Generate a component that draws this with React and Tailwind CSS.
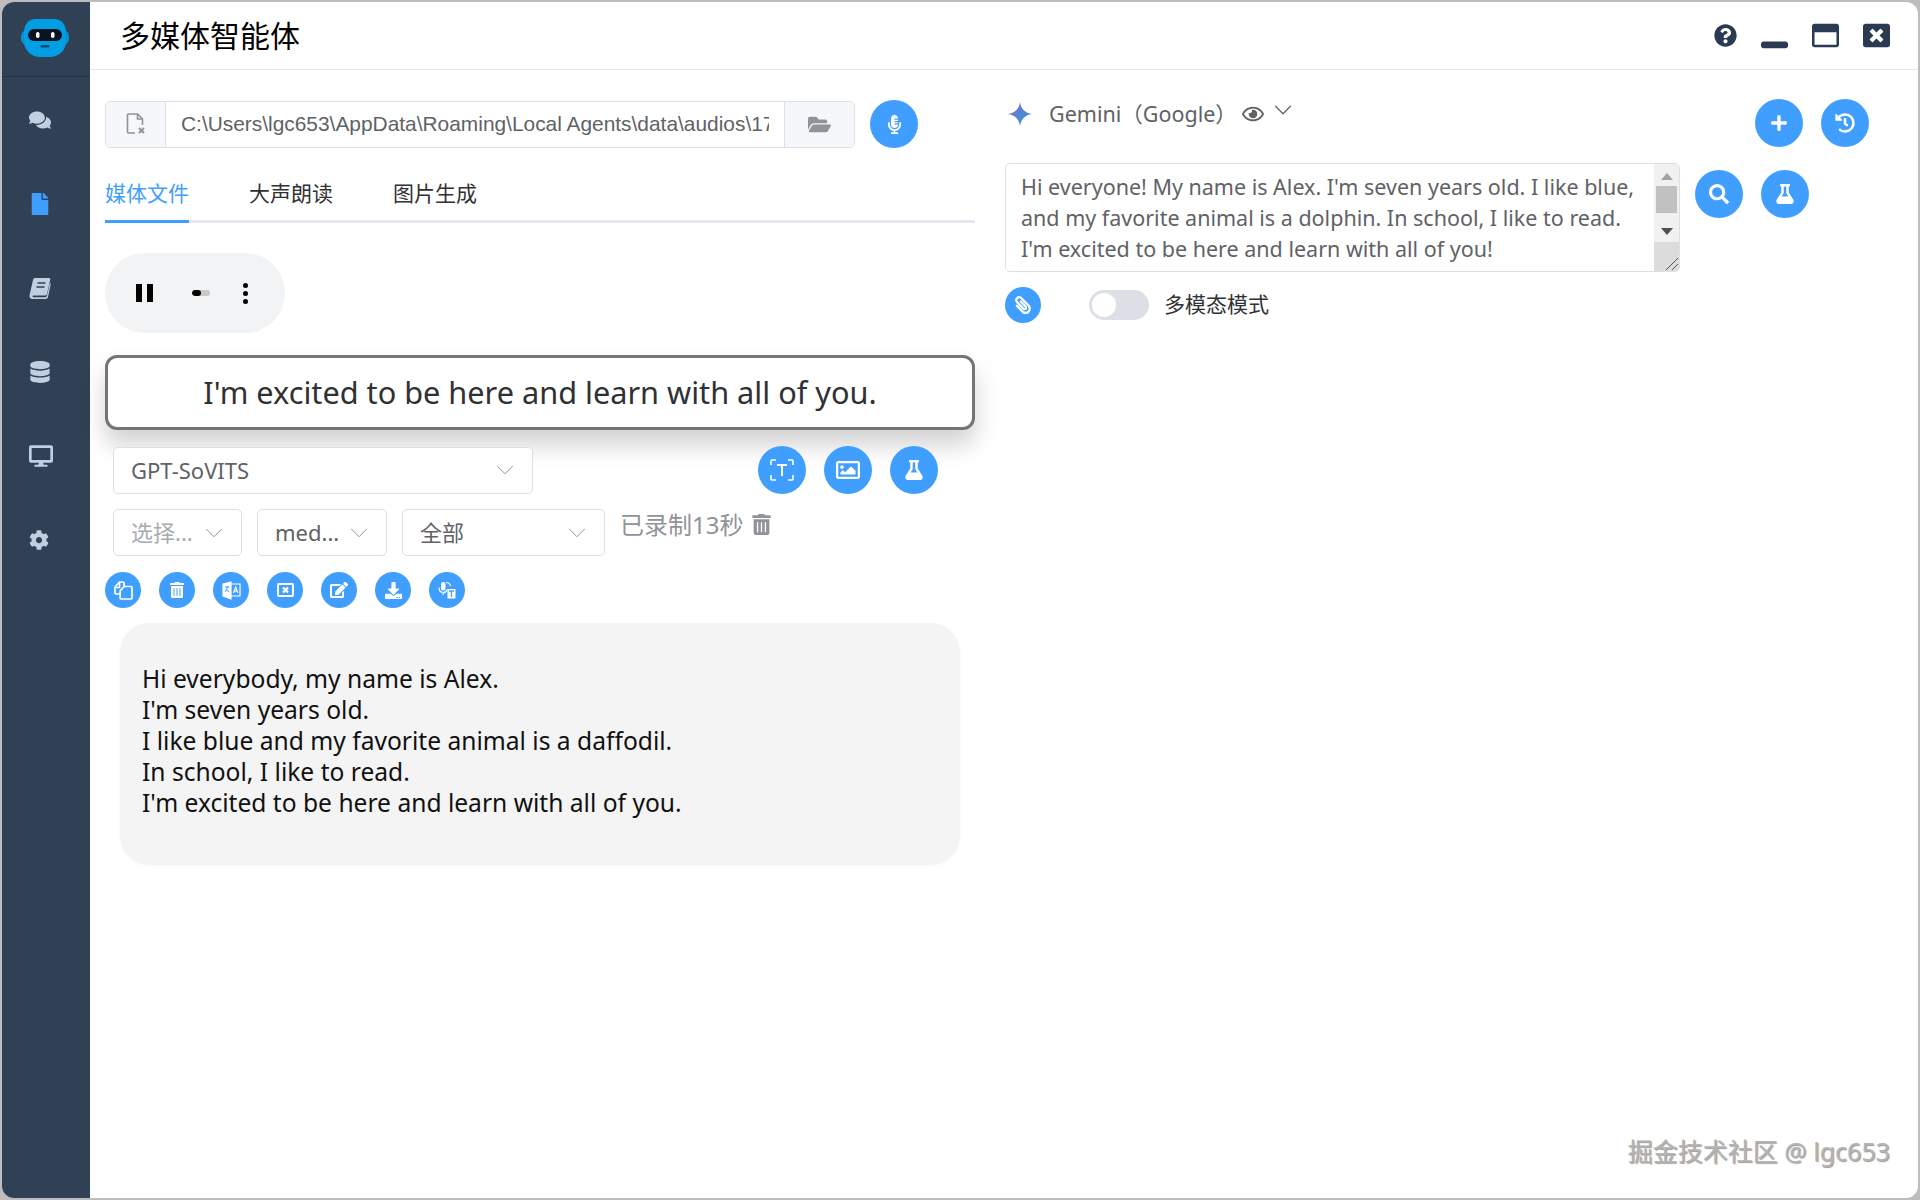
import {
  FaComments,
  FaCog,
  FaDatabase,
  FaDesktop,
  FaDownload,
  FaEdit,
  FaFile,
  FaFlask,
  FaFolderOpen,
  FaHistory,
  FaMicrophoneAlt,
  FaPaperclip,
  FaPlus,
  FaQuestionCircle,
  FaRegEye,
  FaRegImage,
  FaRegWindowMaximize,
  FaSearch,
  FaTrashAlt,
  FaWindowClose,
  FaWindowMinimize
} from 'react-icons/fa'
import { ChevronDown } from 'lucide-react'

const uiFont = "font-['Noto_Sans','Noto_Sans_CJK_SC',sans-serif]"

function Logo() {
  return (
    <svg width="48" height="40" viewBox="0 0 48 40">
      <rect x="0" y="12" width="48" height="15" rx="6" fill="#0a8fd0" />
      <path d="M15 1h18c8 0 12 6 12 14v8c0 10-8 16-16 16H19C11 39 3 33 3 23v-8C3 7 7 1 15 1z" fill="#009fe3" />
      <rect x="7" y="11" width="34" height="12" rx="6" fill="#0b1220" />
      <rect x="15" y="14" width="3.5" height="6" rx="1.7" fill="#fff" />
      <rect x="30" y="14" width="3.5" height="6" rx="1.7" fill="#fff" />
      <rect x="19.5" y="27" width="9" height="2.5" rx="1.2" fill="#0b4a70" />
    </svg>
  )
}

// the tilted book of the older icon set
function TiltedBook({ className }) {
  return (
    <svg width="22" height="22" viewBox="0 0 22 22" className={className}>
      <path
        d="M6 1h14c1 0 1.500.8 1.200 1.800L18 17c-.3 1-1 1.500-2 1.500H4.500c-1.200 0-1.500 1.800 0 1.800H16c1 0 1.600-.6 2-1.500l3-13c.5.400.8 1 .6 2L19 20c-.3 1.200-1.200 2-2.500 2H3.500C1.500 22 0 20.500.6 18L4 3c.3-1.200 1-2 2-2z"
        fill="currentColor"
      />
      <path d="M8.500 6h8M7.500 10h8" stroke="#304156" strokeWidth="1.600" />
    </svg>
  )
}

function Sidebar() {
  const items = [
    { icon: FaComments, size: 22, color: 'text-[#c0d0e2]' },
    { icon: FaFile, size: 22, color: 'text-[#409eff]' },
    { icon: TiltedBook, size: 22, color: 'text-[#c0d0e2]' },
    { icon: FaDatabase, size: 22, color: 'text-[#c0d0e2]' },
    { icon: FaDesktop, size: 24, color: 'text-[#c0d0e2]' },
    { icon: FaCog, size: 20, color: 'text-[#c0d0e2]' }
  ]
  return (
    <aside className="w-[88px] shrink-0 bg-[#304156] flex flex-col">
      <div className="h-[75px] border-b border-[#263447] flex items-center pl-[19px] pb-[3px]">
        <Logo />
      </div>
      <nav className="flex flex-col pt-px">
        {items.map((item, idx) => (
          <div key={idx} className="h-[84px] flex items-center pl-[27px]">
            <item.icon size={item.size} className={item.color} />
          </div>
        ))}
      </nav>
    </aside>
  )
}

function Header() {
  return (
    <header className="h-[68px] shrink-0 border-b border-[#e6e6e6] flex items-center pl-[30px] pr-[28px]">
      <h1 className="text-[30px] font-normal text-black leading-none flex-1 pb-[4px] font-['Noto_Sans_CJK_SC',sans-serif]">
        多媒体智能体
      </h1>
      <div className="flex items-center text-[#2a3a52]">
        <FaQuestionCircle size={23} />
        <FaWindowMinimize size={27} className="ml-[24px] mt-[2px]" />
        <FaRegWindowMaximize size={27} className="ml-[24px]" />
        <FaWindowClose size={27} className="ml-[24px]" />
      </div>
    </header>
  )
}

function Round({ size = 'lg', children }) {
  return (
    <button
      className={`rounded-full bg-[#409eff] text-white flex items-center justify-center shrink-0 ${
        size === 'lg' ? 'w-12 h-12' : 'w-9 h-9'
      }`}
    >
      {children}
    </button>
  )
}

function Select({ width, text, muted }) {
  return (
    <div
      className={`h-[47px] shrink-0 border border-[#dcdfe6] rounded-[5px] bg-white flex items-center justify-between pl-[17px] pr-[12px] text-[22px] ${width} ${
        muted ? 'text-[#a8abb2]' : 'text-[#606266]'
      }`}
    >
      <span className="whitespace-nowrap">{text}</span>
      <ChevronDown size={30} strokeWidth={0.8} className="text-[#909399] shrink-0" />
    </div>
  )
}

function FileXIcon() {
  return (
    <svg width="20" height="22" viewBox="0 0 20 22" fill="none" stroke="#8f9399" strokeWidth="1.6">
      <path d="M9 20H2.500a1 1 0 0 1-1-1V2a1 1 0 0 1 1-1h9l5 5v6" />
      <path d="M11.500 1v5h5" />
      <path d="M13 15l5 5M18 15l-5 5" strokeWidth="2" />
    </svg>
  )
}

function TextScanIcon() {
  return (
    <svg width="24" height="22" viewBox="0 0 24 22" fill="none" stroke="currentColor" strokeWidth="1.6">
      <path d="M1 6V2a1 1 0 0 1 1-1h4M18 1h4a1 1 0 0 1 1 1v4M23 16v4a1 1 0 0 1-1 1h-4M6 21H2a1 1 0 0 1-1-1v-4" />
      <path d="M7 6h10M12 6v11" strokeWidth="2" />
    </svg>
  )
}

function CopyIcon() {
  return (
    <svg width="19" height="19" viewBox="0 0 19 19" fill="none" stroke="currentColor" strokeWidth="1.700">
      <path d="M6 13H2a1 1 0 0 1-1-1V6l4.500-5H9a1 1 0 0 1 1 1v3" />
      <path d="M1 6.500h4.500V1" />
      <path d="M7 18a1 1 0 0 1-.9-1V10l4-4.500H17a1 1 0 0 1 1 1V17a1 1 0 0 1-1 1z" />
    </svg>
  )
}

function TranslateIcon() {
  return (
    <svg width="19" height="19" viewBox="0 0 19 19" fill="none" stroke="currentColor" strokeWidth="1.200">
      <path d="M1 3l8-2v17l-8-3z" fill="currentColor" />
      <path d="M9 3h9v12H9" />
      <path d="M11.500 12l2.200-6 2.200 6M12.300 10h3" />
      <path d="M3 6h4.500M5.200 5v1c0 2-1 4-2.200 5M4 8c.5 1 1.500 2 3.200 3" stroke="#409eff" strokeWidth="1" />
    </svg>
  )
}

function BoxCloseIcon() {
  return (
    <svg width="17" height="14" viewBox="0 0 17 14" fill="none">
      <rect x="1" y="1" width="15" height="12" rx="1" stroke="currentColor" strokeWidth="2" />
      <path d="M6 4.500l5 5M11 4.500l-5 5" stroke="currentColor" strokeWidth="2.400" />
    </svg>
  )
}

function MicTextIcon() {
  return (
    <svg width="18" height="18" viewBox="0 0 18 18" fill="none">
      <rect x="3" y="1" width="4.500" height="8.500" rx="2.200" fill="currentColor" />
      <path d="M1 6.500c0 3 1.600 5 4.200 5s3.400-1.400 3.800-3M5.200 11.500V14" stroke="currentColor" strokeWidth="1.200" />
      <path d="M8 1.500c2.500 0 4 1.400 4.500 3.500" stroke="currentColor" strokeWidth="1.200" />
      <rect x="9.500" y="8" width="8" height="9.500" fill="currentColor" />
      <path d="M11 10h5M13.500 10v6" stroke="#409eff" strokeWidth="1.300" />
    </svg>
  )
}

function AudioBar() {
  return (
    <div className="w-[180px] h-[80px] rounded-[40px] bg-[#f1f3f4] flex items-center pl-[31px]">
      <div className="flex gap-[5px]">
        <span className="w-[6px] h-[18px] bg-black" />
        <span className="w-[6px] h-[18px] bg-black" />
      </div>
      <div className="ml-[39px] w-[18px] h-[6px] rounded-full bg-[#c8c8c8] overflow-hidden">
        <div className="w-[9px] h-full rounded-full bg-black" />
      </div>
      <div className="ml-[33px] flex flex-col gap-[3px]">
        <span className="w-[5px] h-[5px] rounded-full bg-black" />
        <span className="w-[5px] h-[5px] rounded-full bg-black" />
        <span className="w-[5px] h-[5px] rounded-full bg-black" />
      </div>
    </div>
  )
}

function LeftPanel() {
  const tools = [
    <CopyIcon />,
    <FaTrashAlt size={16} />,
    <TranslateIcon />,
    <BoxCloseIcon />,
    <FaEdit size={18} />,
    <FaDownload size={17} />,
    <MicTextIcon />
  ]
  const lines = [
    'Hi everybody, my name is Alex.',
    "I'm seven years old.",
    'I like blue and my favorite animal is a daffodil.',
    'In school, I like to read.',
    "I'm excited to be here and learn with all of you."
  ]
  return (
    <section className="w-[885px] shrink-0 pl-[15px] pt-[30px]">
      <div className="flex items-center gap-[15px]">
        <div className="w-[750px] h-[47px] border border-[#dcdfe6] rounded-[5px] flex overflow-hidden text-[20.9px] text-[#606266] font-['Liberation_Sans',sans-serif]">
          <div className="w-[60px] bg-[#f5f7fa] border-r border-[#dcdfe6] flex items-center justify-center">
            <FileXIcon />
          </div>
          <div className="flex-1 min-w-0 pl-[15px] pr-[15px] flex items-center">
            <span className="whitespace-nowrap overflow-hidden">
              C:\Users\lgc653\AppData\Roaming\Local Agents\data\audios\1718
            </span>
          </div>
          <div className="w-[70px] bg-[#f5f7fa] border-l border-[#dcdfe6] flex items-center justify-center">
            <FaFolderOpen size={23} className="text-[#909399]" />
          </div>
        </div>
        <Round>
          <FaMicrophoneAlt size={19} />
        </Round>
      </div>

      <div className="mt-[30px] w-[870px] flex gap-[60px] border-b-[3px] border-[#e4e7ed] text-[21px] leading-[30px] pb-[12px] text-[#303133]">
        <div className="text-[#409eff] relative">
          媒体文件
          <span className="absolute left-0 right-0 bottom-[-15px] h-[3px] bg-[#409eff]" />
        </div>
        <div>大声朗读</div>
        <div>图片生成</div>
      </div>

      <div className="mt-[30px]">
        <AudioBar />
      </div>

      <div className="mt-[22px] w-[870px] h-[75px] border-[3px] border-[#757575] rounded-[12px] bg-white shadow-[0_15px_25px_rgba(0,0,0,0.18)] flex items-center justify-center text-[30.7px] text-[#303133]">
        I'm excited to be here and learn with all of you.
      </div>

      <div className="mt-[16px] flex items-center pl-[8px]">
        <Select width="w-[420px]" text="GPT-SoVITS" />
        <div className="ml-[225px] flex gap-[18px]">
          <Round>
            <TextScanIcon />
          </Round>
          <Round>
            <FaRegImage size={24} />
          </Round>
          <Round>
            <FaFlask size={20} />
          </Round>
        </div>
      </div>

      <div className="mt-[15px] flex pl-[8px]">
        <Select width="w-[129px]" text="选择..." muted />
        <div className="ml-[15px]">
          <Select width="w-[130px]" text="med..." />
        </div>
        <div className="ml-[15px]">
          <Select width="w-[203px]" text="全部" />
        </div>
        <div className="ml-[15px] flex items-start gap-[8px] text-[24px] leading-[32px] text-[#909399]">
          已录制13秒
          <FaTrashAlt size={21} className="mt-[5px]" />
        </div>
      </div>

      <div className="mt-[16px] flex gap-[18px]">
        {tools.map((tool, idx) => (
          <Round key={idx} size="sm">
            {tool}
          </Round>
        ))}
      </div>

      <div className="mt-[15px] ml-[15px] w-[840px] h-[242px] rounded-[30px] bg-[#f4f4f4] shadow-[0_1px_4px_rgba(0,0,0,0.03)] pl-[22px] pt-[40px] text-[24.6px] leading-[31px] text-[#111]">
        {lines.map(line => (
          <div key={line}>{line}</div>
        ))}
      </div>
    </section>
  )
}

function GeminiStar() {
  return (
    <svg width="26" height="26" viewBox="0 0 26 26">
      <defs>
        <linearGradient id="gem" x1="0" y1="0" x2="1" y2="1">
          <stop offset="0" stopColor="#9168c0" />
          <stop offset="0.5" stopColor="#5684d1" />
          <stop offset="1" stopColor="#1ba1e3" />
        </linearGradient>
      </defs>
      <path d="M13 1c1 7 5 11 12 12-7 1-11 5-12 12-1-7-5-11-12-12 7-1 11-5 12-12z" fill="url(#gem)" />
    </svg>
  )
}

function RightPanel() {
  return (
    <section className="flex-1 min-w-0 pl-[30px] pt-[24px] relative">
      <div className="flex items-start">
        <div className="flex items-center h-[40px] pl-[2px] text-[21.5px] text-[#606266]">
          <GeminiStar />
          <span className="ml-[16px]">Gemini（Google）</span>
          <FaRegEye size={22} className="ml-[5px]" />
          <ChevronDown size={30} strokeWidth={1} className="ml-[4px] mb-[8px]" />
        </div>
        <div className="ml-auto mr-[49px] mt-[5px] flex gap-[18px]">
          <Round>
            <FaPlus size={18} />
          </Round>
          <Round>
            <FaHistory size={20} />
          </Round>
        </div>
      </div>

      <div className="flex items-start mt-[16px]">
        <div className="w-[675px] h-[109px] border border-[#dcdfe6] rounded-[5px] flex overflow-hidden">
          <div className="flex-1 pl-[15px] pt-[7px] pr-[12px] text-[21.5px] leading-[31px] text-[#606266]">
            Hi everyone! My name is Alex. I'm seven years old. I like blue, and my favorite animal is a dolphin. In
            school, I like to read. I'm excited to be here and learn with all of you!
          </div>
          <div className="w-[25px] shrink-0 bg-[#f1f1f1] flex flex-col items-center">
            <span className="mt-[9px] w-0 h-0 border-x-[6px] border-x-transparent border-b-[7px] border-b-[#a3a3a3]" />
            <span className="mt-[6px] w-[21px] h-[27px] bg-[#c1c1c1]" />
            <span className="mt-[15px] w-0 h-0 border-x-[6px] border-x-transparent border-t-[7px] border-t-[#505050]" />
            <span className="mt-[7px] w-full flex-1 bg-[#dcdcdc] flex items-end justify-end">
              <svg width="14" height="14" viewBox="0 0 14 14" stroke="#555" strokeWidth="1">
                <path d="M1 13L13 1M7 13l6-6" />
              </svg>
            </span>
          </div>
        </div>
        <div className="ml-[15px] flex gap-[18px] mt-[7px]">
          <Round>
            <FaSearch size={20} />
          </Round>
          <Round>
            <FaFlask size={20} />
          </Round>
        </div>
      </div>

      <div className="mt-[15px] flex items-center">
        <Round size="sm">
          <FaPaperclip size={18} className="-scale-x-100" />
        </Round>
        <div className="ml-[48px] w-[60px] h-[30px] rounded-full bg-[#dcdfe6] p-[3px]">
          <div className="w-[24px] h-[24px] rounded-full bg-white" />
        </div>
        <span className="ml-[15px] text-[21px] text-[#303133]">多模态模式</span>
      </div>
    </section>
  )
}

export default function App() {
  return (
    <div className={`h-[1200px] w-[1920px] bg-[#bdbdbd] p-[2px] overflow-hidden relative ${uiFont}`}>
      <div className="h-full rounded-[12px] overflow-hidden bg-white flex">
        <Sidebar />
        <main className="flex-1 min-w-0 flex flex-col">
          <Header />
          <div className="flex flex-1 min-h-0">
            <LeftPanel />
            <RightPanel />
          </div>
        </main>
      </div>
      <div className="absolute right-[30px] bottom-[30px] text-[25px] text-[#b4b4b4] [text-shadow:1px_1px_1px_rgba(0,0,0,0.4)]">
        掘金技术社区 @ lgc653
      </div>
    </div>
  )
}
